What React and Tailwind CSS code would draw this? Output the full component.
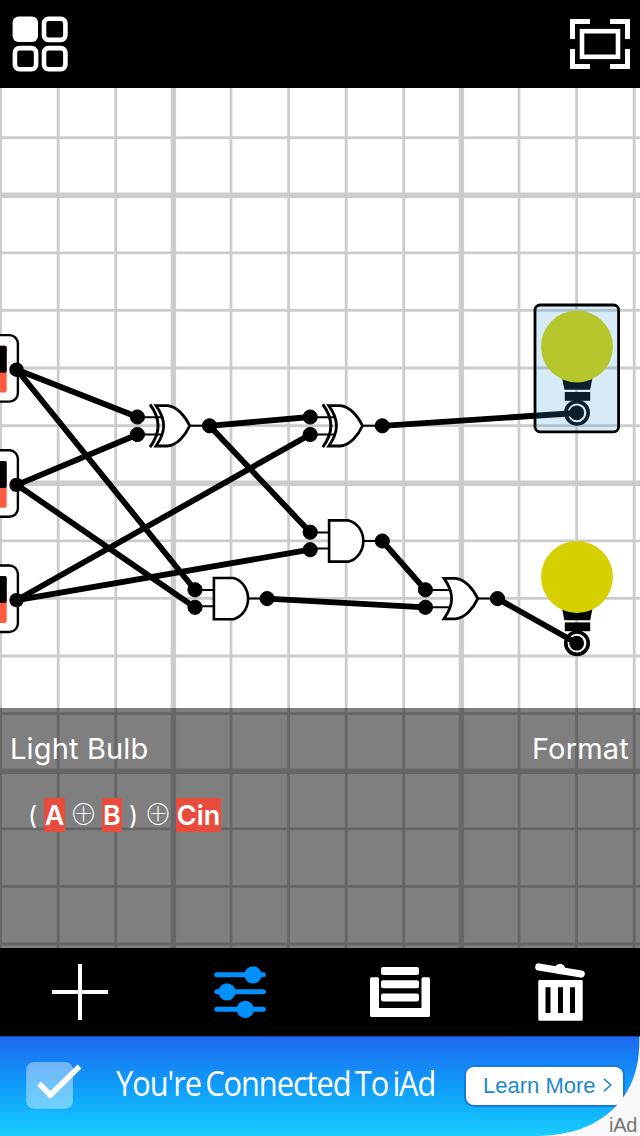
import React from "react";

const STEP = 57.6;
const columns = Array.from({ length: 12 }, (_, k) => ({ at: 0.6 + k * STEP, major: k % 5 === 3 }));
const rows = Array.from({ length: 15 }, (_, i) => ({ at: 80 + (i + 1) * STEP, major: (i + 1) % 5 === 2 }));

const wires = [
  [17, 369.7, 137.4, 417],
  [17, 369.7, 194.9, 589.8],
  [17, 484.9, 137.4, 434.5],
  [17, 484.9, 194.9, 607.3],
  [17, 600.1, 310.1, 434.5],
  [17, 600.1, 310.1, 549.7],
  [209.5, 425.8, 310.1, 417],
  [209.5, 425.8, 310.1, 532.2],
  [382.3, 425.8, 576.8, 413],
  [382.3, 541, 425.4, 589.8],
  [267, 598.6, 425.4, 607.3],
  [497.6, 598.6, 576.8, 643.3],
];

function Grid() {
  return (
    <g stroke="#cccccc">
      {columns.map((c) => (
        <line key={c.at} x1={c.at} x2={c.at} y1="88" y2="948" strokeWidth={c.major ? 5.4 : 2.8} />
      ))}
      {rows.map((r) => (
        <line key={r.at} y1={r.at} y2={r.at} x1="0" x2="640" strokeWidth={r.major ? 5.4 : 2.8} />
      ))}
    </g>
  );
}

function Toggle({ y }) {
  return (
    <g transform={`translate(0 ${y})`}>
      <rect x="-60" y="-34.6" width="77.9" height="66.5" rx="8.5" fill="#fff" stroke="#000" strokeWidth="2.4" />
      <rect x="-20" y="-24" width="26.7" height="46.8" rx="2" fill="#ff5c3f" />
      <path d="M-20 -24H4.7a2 2 0 0 1 2 2V1a2 2 0 0 1 -2 2H-20z" fill="#000" />
      <circle cx="16.5" cy="0" r="7.2" fill="#000" />
    </g>
  );
}

function Pins() {
  return (
    <g fill="#000">
      <circle cx="-35.8" cy="-8.8" r="7.1" />
      <circle cx="-35.8" cy="8.7" r="7.1" />
      <circle cx="36.3" cy="0" r="7.1" />
    </g>
  );
}

function OrGate({ x, y, exclusive }) {
  return (
    <g transform={`translate(${x} ${y})`} fill="none" stroke="#000">
      <path
        d="M-17.2 -20.2H-5.6C4 -19 12 -10 16.5 0C12 10 4 19 -5.6 20.2H-17.2C-7 6 -7 -6 -17.2 -20.2Z"
        fill="#fff"
        strokeWidth="2.8"
      />
      {exclusive && <path d="M-23.2 -21.4C-12.4 -6.5 -12.4 6.5 -23.2 21.4" strokeWidth="3" />}
      <path d="M-35.8 -8.6H-11.5M-35.8 8.7H-11.5M16.8 0H36" strokeWidth="2" />
      <Pins />
    </g>
  );
}

function AndGate({ x, y }) {
  return (
    <g transform={`translate(${x} ${y})`} fill="none" stroke="#000">
      <path d="M-16.9 -20.6H2.6C12 -18 17.3 -9 17.3 0C17.3 9 12 18 2.6 20.6H-16.9Z" fill="#fff" strokeWidth="2.6" />
      <path d="M-35.8 -8.6H-17M-35.8 7.6H-17M17.3 0H36" strokeWidth="2" />
      <Pins />
    </g>
  );
}

function Bulb({ y }) {
  return (
    <g transform={`translate(577 ${y})`}>
      <path d="M-15 31H15.6L13.2 43.2H-12.6Z" />
      <rect x="-12.2" y="45.4" width="25.4" height="8.8" />
      <circle cx="0" cy="66.2" r="11.2" fill="#fff" stroke="#000" strokeWidth="3.6" />
      <circle cx="-0.3" cy="66.2" r="7.4" />
      <circle cx="0" cy="0" r="36" fill="#d5d100" />
    </g>
  );
}

function Circuit() {
  return (
    <svg className="block h-[860px] w-[640px]" viewBox="0 88 640 860">
      <Grid />
      <Toggle y={369.7} />
      <Toggle y={484.9} />
      <Toggle y={600.1} />
      <OrGate x={173.2} y={425.8} exclusive />
      <OrGate x={346} y={425.8} exclusive />
      <AndGate x={346} y={541} />
      <AndGate x={230.8} y={598.6} />
      <OrGate x={461.2} y={598.6} />
      <Bulb y={346.6} />
      <Bulb y={577} />
      <g stroke="#000" strokeWidth="5.8" strokeLinecap="round">
        {wires.map(([x1, y1, x2, y2], i) => (
          <line key={i} x1={x1} y1={y1} x2={x2} y2={y2} />
        ))}
      </g>
      <rect x="535" y="305" width="83.6" height="126.8" rx="5" fill="#329bd7" fillOpacity="0.2" />
      <rect x="535" y="305" width="83.6" height="126.8" rx="5" fill="none" stroke="#000" strokeWidth="2.8" />
    </svg>
  );
}

function Operand({ children, className }) {
  return (
    <span className={`flex h-[34px] items-center justify-center bg-[#e74c3c] text-[27px] font-semibold ${className}`}>
      {children}
    </span>
  );
}

function Paren({ children, className }) {
  return <span className={`flex h-[34px] w-[13px] items-center justify-center text-[25px] ${className}`}>{children}</span>;
}

function Xor({ className }) {
  return (
    <span
      className={`-mt-0.5 flex h-[34px] items-center justify-center font-['Noto_Sans_CJK_JP',sans-serif] text-[28px] font-thin ${className}`}
    >
      ⊕
    </span>
  );
}

export default function App() {
  return (
    <div className="flex h-[1136px] w-[640px] flex-col overflow-hidden bg-black font-['Inter',sans-serif] text-white">
      <header className="flex h-[88px] shrink-0 items-center justify-between pl-3 pr-[10px]">
        <svg className="h-14 w-14" viewBox="12 16 56 56" fill="none" stroke="#fff" strokeWidth="4.6">
          <rect x="12.6" y="16.6" width="25.4" height="25.4" rx="6" fill="#fff" stroke="none" />
          <rect x="44" y="18.7" width="21.4" height="21.2" rx="4.6" />
          <rect x="14.9" y="48.1" width="21.2" height="21.2" rx="4.6" />
          <rect x="44" y="48.1" width="21.4" height="21.2" rx="4.6" />
        </svg>
        <svg className="h-[50px] w-[60px]" viewBox="570 19 60 50" fill="none" stroke="#fff" strokeWidth="5">
          <path d="M590 21.5H572.5V39M610 21.5H627.5V39M590 66.5H572.5V49M610 66.5H627.5V49" />
          <rect x="582" y="31.2" width="36" height="25.6" strokeWidth="4.6" />
        </svg>
      </header>

      <main className="relative h-[860px] shrink-0 bg-white">
        <Circuit />
        <section className="absolute inset-x-0 bottom-0 h-[240px] bg-black/50">
          <div className="flex justify-between pl-[10px] pr-[11px] pt-6 text-[29px] leading-[34px]">
            <h1 className="tracking-[0.15px]">Light Bulb</h1>
            <button className="tracking-[0.2px]">Format</button>
          </div>
          <div className="flex pl-[26px] pt-8 leading-none">
            <Paren className="mr-[5px]">(</Paren>
            <Operand className="w-[21px]">A</Operand>
            <Xor className="w-[37px]" />
            <Operand className="w-[20px]">B</Operand>
            <Paren className="ml-[5px]">)</Paren>
            <Xor className="w-[36px]" />
            <Operand className="w-[45px]">Cin</Operand>
          </div>
        </section>
      </main>

      <nav className="grid h-[88px] shrink-0 grid-cols-4">
        <svg className="h-[88px] w-40" viewBox="0 948 160 88" stroke="#fff" strokeWidth="4">
          <path d="M80 964V1020M52 992H108" />
        </svg>
        <svg className="h-[88px] w-40" viewBox="160 948 160 88" stroke="#0091ff" strokeWidth="5" strokeLinecap="round" fill="#0091ff">
          <path d="M216.8 974.8H263.3M216.8 991.8H263.3M216.8 1009.2H263.3" />
          <g stroke="none">
            <circle cx="253" cy="974.8" r="8.6" />
            <circle cx="227" cy="991.8" r="8.6" />
            <circle cx="245.3" cy="1009.4" r="8.6" />
          </g>
        </svg>
        <svg className="h-[88px] w-40" viewBox="320 948 160 88" fill="#fff">
          <rect x="381" y="967" width="38" height="8" rx="2" />
          <rect x="381" y="980.3" width="38" height="8" rx="2" />
          <rect x="381" y="993.6" width="38" height="8" rx="2" />
          <path d="M371.5 977.3H377.5Q379 977.3 379 979V1008H421.5V979Q421.5 977.3 423 977.3H428.5Q430 977.3 430 979V1015.5Q430 1017 428.5 1017H371.5Q370 1017 370 1015.5V979Q370 977.3 371.5 977.3Z" />
        </svg>
        <svg className="h-[88px] w-40" viewBox="480 948 160 88" fill="#fff">
          <path
            fillRule="evenodd"
            d="M539.5 980H581.5Q582.7 980 582.7 981.2V1019.6Q582.7 1020.8 581.5 1020.8H539.5Q538.3 1020.8 538.3 1019.6V981.2Q538.3 980 539.5 980ZM545.5 987.2V1013H550.5V987.2ZM558 987.2V1013H563V987.2ZM570 987.2V1013H575V987.2Z"
          />
          <path d="M538.8 967L581.2 974" stroke="#fff" strokeWidth="7.2" strokeLinecap="round" />
          <circle cx="560" cy="969" r="5.3" />
        </svg>
      </nav>

      <footer className="relative flex h-[100px] shrink-0 items-center bg-gradient-to-b from-[#1e67f0] to-[#1acdff]">
        <svg className="ml-[26px] h-12 w-14 shrink-0" viewBox="26 1062 56 48" fill="none">
          <rect x="26.2" y="1062" width="46.8" height="46.8" rx="8" fill="#fff" fillOpacity="0.4" />
          <path d="M39 1083.5L50.3 1095L79.5 1066.5" stroke="#fff" strokeWidth="5.6" />
        </svg>
        <p className="-mt-[7px] ml-[34px] w-[350px] shrink-0 origin-left scale-x-[0.905] whitespace-nowrap font-['Open_Sans',sans-serif] text-[34px] leading-[48px] tracking-[-1.15px] [word-spacing:-3px]">
          You're Connected To iAd
        </p>
        <button className="flex h-[38px] w-[157px] shrink-0 items-center justify-between rounded-[8px] bg-white pl-[17px] pr-[11px] font-['Liberation_Sans',sans-serif] text-[22px] text-[#1e88cc] ring-2 ring-[#1878dc]">
          <span className="-mt-0.5">Learn More</span>
          <svg className="-mt-0.5 h-[14px] w-[9px]" viewBox="0 0 9 14" fill="none" stroke="#1e88cc" strokeWidth="1.6">
            <path d="M1 0.8L7.8 7L1 13.2" />
          </svg>
        </button>
        <svg className="pointer-events-none absolute inset-0 h-[100px] w-[640px]" viewBox="0 1036 640 100">
          <path d="M0 1036.5H640" stroke="#174a9e" />
          <path d="M639.3 1037C640 1063 634 1086 618 1104C598 1126 572 1135.5 535 1136H640V1037Z" fill="#faf8fb" />
        </svg>
        <span className="absolute -bottom-px right-[3px] font-['Liberation_Sans',sans-serif] text-[20px] leading-[23px] tracking-[-0.3px] text-[#747474]">
          iAd
        </span>
      </footer>
    </div>
  );
}
